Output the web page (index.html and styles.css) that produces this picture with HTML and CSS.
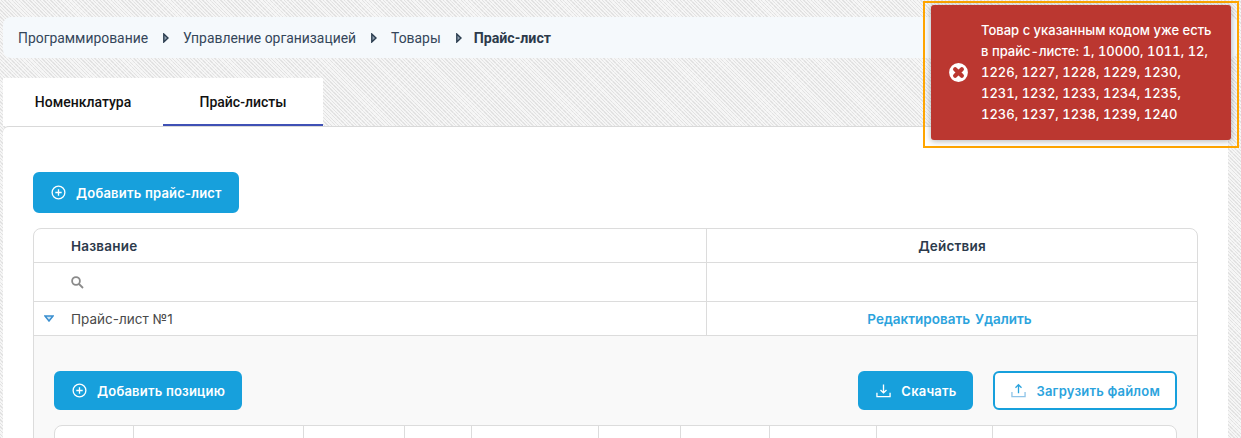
FILE: index.html
```html
<!DOCTYPE html>
<html lang="ru">

<head>
  <meta charset="UTF-8" />
  <meta name="viewport" content="width=device-width, initial-scale=1.0" />
  <link rel="stylesheet" href="styles.css">
  <title>Прайс-лист</title>
</head>

<body>
  <nav class="breadcrumb">
    <a>Программирование</a>
    <svg class="crumb-arrow" viewBox="0 0 6 10"><path d="M.8 1l4.2 4-4.2 4z" /></svg>
    <a>Управление организацией</a>
    <svg class="crumb-arrow" viewBox="0 0 6 10"><path d="M.8 1l4.2 4-4.2 4z" /></svg>
    <a>Товары</a>
    <svg class="crumb-arrow" viewBox="0 0 6 10"><path d="M.8 1l4.2 4-4.2 4z" /></svg>
    <b>Прайс-лист</b>
  </nav>

  <div class="tabs">
    <div class="tab">Номенклатура</div>
    <div class="tab active">Прайс-листы</div>
  </div>

  <main class="card">
    <button class="btn">
      <svg class="icon" viewBox="0 0 16 16"><circle cx="8" cy="8" r="6.8" /><path d="M8 4.6v6.8M4.6 8h6.8" /></svg>
      Добавить прайс-лист
    </button>

    <div class="table">
      <div class="row head">
        <div class="cell name">Название</div>
        <div class="cell actions">Действия</div>
      </div>
      <div class="row search">
        <div class="cell name">
          <svg class="search-icon" viewBox="0 0 13 13"><circle cx="5" cy="5" r="3.9" /><path d="M8 8l4 4" /></svg>
        </div>
        <div class="cell actions"></div>
      </div>
      <div class="row item">
        <svg class="expander" viewBox="0 0 10 7"><path d="M1 1h8L5 6z" /></svg>
        <div class="cell name">Прайс-лист №1</div>
        <div class="cell actions links"><a>Редактировать</a> <a>Удалить</a></div>
      </div>
      <div class="detail">
        <div class="toolbar">
          <button class="btn small">
            <svg class="icon" viewBox="0 0 16 16"><circle cx="8" cy="8" r="6.8" /><path d="M8 4.6v6.8M4.6 8h6.8" /></svg>
            Добавить позицию
          </button>
          <div class="toolbar-right">
            <button class="btn small">
              <svg class="icon" viewBox="0 0 16 16"><path d="M8 1.5v9M4.8 7.4L8 10.6l3.2-3.2M1 10.5v4h14v-4" /></svg>
              Скачать
            </button>
            <button class="btn small outline">
              <svg class="icon" viewBox="0 0 16 16"><path d="M8 11V2M4.8 5L8 1.8 11.2 5" /><path class="tray" d="M1 9.5v5h14v-5" /></svg>
              Загрузить файлом
            </button>
          </div>
        </div>
        <div class="positions">
          <div class="pos" style="width: 79px"></div>
          <div class="pos" style="width: 170px"></div>
          <div class="pos" style="width: 101px"></div>
          <div class="pos" style="width: 67px"></div>
          <div class="pos" style="width: 127px"></div>
          <div class="pos" style="width: 82px"></div>
          <div class="pos" style="width: 89px"></div>
          <div class="pos" style="width: 107px"></div>
          <div class="pos" style="width: 116px"></div>
          <div class="pos last"></div>
        </div>
      </div>
    </div>
  </main>

  <div class="toast-frame">
    <div class="toast">
      <svg class="toast-icon" viewBox="0 0 24 24">
        <circle cx="12" cy="12" r="12" fill="#fff" />
        <path d="M8.5 8.5l7 7M15.500 8.500l-7 7" />
      </svg>
      <p>Товар с указанным кодом уже есть в прайс-листе: 1, 10000, 1011, 12, 1226, 1227, 1228, 1229, 1230, 1231, 1232, 1233, 1234, 1235, 1236, 1237, 1238, 1239, 1240</p>
    </div>
  </div>
</body>

</html>
```

FILE: styles.css
```css
* {
  box-sizing: border-box;
}

html,
body {
  height: 438px;
  overflow: hidden;
}

body {
  margin: 0;
  padding: 17px 13px 0 3px;
  font-family: Roboto, "Liberation Sans", sans-serif;
  font-size: 14px;
  color: #34465a;
  background-color: #f2f2f2;
  background-image:
    repeating-linear-gradient(135deg, rgba(255, 255, 255, 0.25) 0 1px, transparent 1px 5px),
    repeating-linear-gradient(45deg, #e2e2e2 0 1px, #f5f5f5 1px 2.5px);
}

.breadcrumb {
  display: flex;
  align-items: center;
  height: 41px;
  padding-left: 15px;
  background: #f5f9fc;
  border-radius: 8px;
  margin-right: -10px;
  font-size: 13.9px;
}

.crumb-arrow {
  width: 6px;
  height: 10px;
  margin: 0 14px 0 15px;
  fill: #8fa0b0;
  stroke: #2c3e50;
  stroke-width: 1.4;
}

.breadcrumb b {
  margin-left: -2px;
  font-size: 14.2px;
  font-weight: 700;
  color: #2c3a4b;
}

.tabs {
  display: flex;
  margin-top: 20px;
  width: 320px;
  height: 48px;
  background: #fff;
}

.tab {
  width: 160px;
  padding-top: 16px;
  text-align: center;
  font-weight: 500;
  color: #111;
}

.tab.active {
  border-bottom: 2px solid #3f51b5;
}

.card {
  height: 320px;
  padding: 45px 30px 0;
  background: #fff;
  border-top: 1px solid #d9d9d9;
  border-radius: 6px 6px 0 0;
}

.btn {
  display: inline-flex;
  align-items: center;
  height: 41px;
  padding: 0 15px 0 16px;
  border: 2px solid #17a0dc;
  border-radius: 6px;
  background: #17a0dc;
  color: #fff;
  font-family: Inter, sans-serif;
  font-size: 13px;
  font-weight: 600;
  letter-spacing: 0.2px;
}

.btn.small {
  height: 39px;
}

.btn.outline {
  background: #fff;
  color: #2ba3dd;
}

.icon {
  flex: none;
  width: 15px;
  height: 15px;
  margin-right: 10px;
  fill: none;
  stroke: currentColor;
  stroke-width: 1.4;
}

.tray {
  stroke: #8fc4e8;
}

.table {
  margin-top: 15px;
  border: 1px solid #dcdcdc;
  border-radius: 8px 8px 0 0;
  height: 260px;
  overflow: hidden;
  font-family: Inter, sans-serif;
  font-size: 13.5px;
}

.row {
  position: relative;
  display: flex;
  border-bottom: 1px solid #dcdcdc;
}

.row.head {
  height: 34px;
  font-weight: 600;
  letter-spacing: 0.2px;
  color: #2c3a4b;
}

.row.search {
  height: 39px;
}

.row.item {
  height: 34px;
  color: #4a4a4a;
}

.cell {
  display: flex;
  align-items: center;
}

.cell.name {
  width: 673px;
  padding-left: 37px;
  border-right: 1px solid #dcdcdc;
}

.cell.actions {
  flex: 1;
  justify-content: center;
}

.links {
  gap: 5px;
  padding-right: 5px;
  color: #2ba3dd;
  font-weight: 600;
}

.search-icon {
  width: 13px;
  height: 13px;
  fill: none;
  stroke: #8a8a8a;
  stroke-width: 1.8;
}

.expander {
  position: absolute;
  left: 10px;
  top: 13px;
  width: 10px;
  height: 7px;
  fill: #cfe6f5;
  stroke: #3a8fd0;
  stroke-width: 1.5;
}

.detail {
  height: 150px;
  padding: 35px 20px 0;
  background: #f9f9f9;
}

.toolbar {
  display: flex;
  justify-content: space-between;
}

.toolbar-right {
  display: flex;
  gap: 20px;
}

.positions {
  display: flex;
  margin-top: 15px;
  height: 40px;
  background: #fff;
  border: 1px solid #dcdcdc;
  border-radius: 8px 8px 0 0;
}

.pos {
  flex: none;
  border-right: 1px solid #dcdcdc;
}

.pos.last {
  flex: 1;
  border-right: none;
}

.toast-frame {
  position: absolute;
  top: 1px;
  left: 923px;
  width: 316px;
  height: 147px;
  padding: 2px 6px 6px;
  border: 2px solid #ffa500;
}

.toast {
  display: flex;
  align-items: center;
  gap: 11px;
  height: 135px;
  padding: 0 16px;
  background: #bb3730;
  border-radius: 3px;
  box-shadow: 0 1px 6px rgba(0, 0, 0, 0.3);
  color: #fff;
}

.toast p {
  width: 234px;
  margin: 0;
  font-family: Inter, sans-serif;
  font-size: 13px;
  font-weight: 500;
  font-variant-numeric: tabular-nums;
  line-height: 21px;
}

.toast-icon {
  flex: none;
  width: 23px;
  height: 23px;
  fill: none;
  stroke: #bb3730;
  stroke-width: 4.4;
  stroke-linecap: round;
}
```
